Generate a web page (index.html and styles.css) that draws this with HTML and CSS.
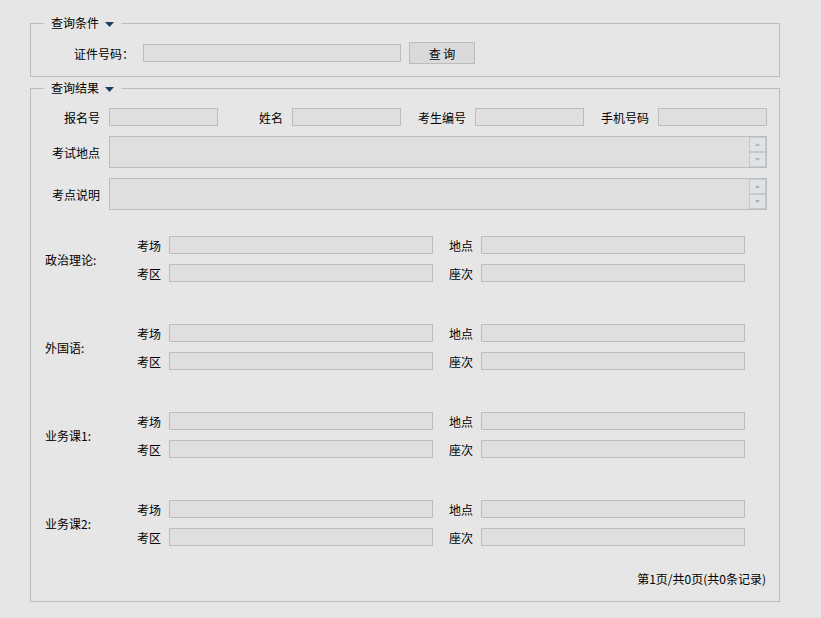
FILE: index.html
```html
<!DOCTYPE html>
<html lang="zh-CN">
<head>
    <meta charset="UTF-8">
    <title>准考证查询</title>
    <link rel="stylesheet" href="styles.css">
</head>
<body>
    <!-- 查询条件 -->
    <fieldset class="group group-search">
        <legend>查询条件<svg class="caret" width="9" height="5" viewBox="0 0 9 5"><polygon points="0,0 9,0 4.5,5" fill="#1c3f5f"/></svg></legend>
        <div class="search-row">
            <label class="search-label">证件号码：</label>
            <input type="text" class="field id-field">
            <button class="query-btn">查 询</button>
        </div>
    </fieldset>

    <!-- 查询结果 -->
    <fieldset class="group group-result">
        <legend>查询结果<svg class="caret" width="9" height="5" viewBox="0 0 9 5"><polygon points="0,0 9,0 4.5,5" fill="#1c3f5f"/></svg></legend>
        <div class="result">
            <div class="info-grid">
                <label>报名号</label><input type="text" class="field">
                <label>姓名</label><input type="text" class="field">
                <label>考生编号</label><input type="text" class="field">
                <label>手机号码</label><input type="text" class="field">
            </div>

            <div class="memo-row">
                <label>考试地点</label>
                <div class="memo">
                    <div class="memo-text"></div>
                    <div class="spin">
                        <span class="spin-btn"><svg width="5" height="3" viewBox="0 0 5 3"><polygon points="0,3 5,3 2.5,0" fill="#a3b2c1"/></svg></span>
                        <span class="spin-btn"><svg width="5" height="3" viewBox="0 0 5 3"><polygon points="0,0 5,0 2.5,3" fill="#a3b2c1"/></svg></span>
                    </div>
                </div>
            </div>
            <div class="memo-row">
                <label>考点说明</label>
                <div class="memo">
                    <div class="memo-text"></div>
                    <div class="spin">
                        <span class="spin-btn"><svg width="5" height="3" viewBox="0 0 5 3"><polygon points="0,3 5,3 2.5,0" fill="#a3b2c1"/></svg></span>
                        <span class="spin-btn"><svg width="5" height="3" viewBox="0 0 5 3"><polygon points="0,0 5,0 2.5,3" fill="#a3b2c1"/></svg></span>
                    </div>
                </div>
            </div>

            <div class="subject first">
                <div class="subject-name">政治理论:</div>
                <div class="subject-grid">
                    <label>考场</label><input type="text" class="field">
                    <label>地点</label><input type="text" class="field">
                    <label>考区</label><input type="text" class="field">
                    <label>座次</label><input type="text" class="field">
                </div>
            </div>
            <div class="subject">
                <div class="subject-name">外国语:</div>
                <div class="subject-grid">
                    <label>考场</label><input type="text" class="field">
                    <label>地点</label><input type="text" class="field">
                    <label>考区</label><input type="text" class="field">
                    <label>座次</label><input type="text" class="field">
                </div>
            </div>
            <div class="subject">
                <div class="subject-name">业务课1:</div>
                <div class="subject-grid">
                    <label>考场</label><input type="text" class="field">
                    <label>地点</label><input type="text" class="field">
                    <label>考区</label><input type="text" class="field">
                    <label>座次</label><input type="text" class="field">
                </div>
            </div>
            <div class="subject">
                <div class="subject-name">业务课2:</div>
                <div class="subject-grid">
                    <label>考场</label><input type="text" class="field">
                    <label>地点</label><input type="text" class="field">
                    <label>考区</label><input type="text" class="field">
                    <label>座次</label><input type="text" class="field">
                </div>
            </div>

            <div class="pager">第1页/共0页(共0条记录)</div>
        </div>
    </fieldset>
</body>
</html>
```

FILE: styles.css
```css
body {
    margin: 0;
    background-color: #e6e6e6;
    font-family: "Noto Sans CJK SC", "DejaVu Sans", sans-serif;
    font-size: 12px;
    color: #000;
}

.group {
    box-sizing: border-box;
    width: 750px;
    margin: 0 0 0 30px;
    padding: 0;
    border: 1px solid #bcbcbc;
    min-width: 0;
}

.group-search {
    margin-top: 15px;
}

.group-result {
    margin-top: 3px;
}

legend {
    margin-left: 13px;
    padding: 0 7px;
    line-height: 16px;
    height: 16px;
}

.caret {
    margin-left: 6px;
    vertical-align: 1px;
}

.field {
    box-sizing: border-box;
    height: 18px;
    margin: 0;
    padding: 0 3px;
    border: 1px solid #bcbcbc;
    background-color: #dfdfdf;
    font-family: inherit;
    font-size: 12px;
    outline: none;
}

label {
    line-height: 17px;
    white-space: nowrap;
}

/* search */
.search-row {
    display: flex;
    align-items: center;
    gap: 9px;
    padding: 11px 0 12px 43px;
}

.id-field {
    width: 258px;
}

.query-btn {
    box-sizing: border-box;
    width: 66px;
    height: 22px;
    margin-left: -1px;
    padding: 0;
    border: 1px solid #bcbcbc;
    background-color: #dadada;
    font-family: inherit;
    font-size: 12px;
    color: #000;
}

/* result */
.result {
    padding: 12px 13px 14px 13px;
}

.info-grid {
    display: grid;
    grid-template-columns: repeat(4, 56px 109px);
    column-gap: 9px;
    align-items: center;
}

.info-grid label {
    text-align: right;
}

.memo-row {
    display: grid;
    grid-template-columns: 56px 658px;
    column-gap: 9px;
    align-items: center;
    margin-top: 10px;
}

.memo-row label {
    text-align: right;
}

.memo {
    box-sizing: border-box;
    display: flex;
    height: 32px;
    border: 1px solid #bcbcbc;
    background-color: #dfdfdf;
}

.memo-text {
    flex: 1;
}

.spin {
    display: flex;
    flex-direction: column;
    width: 17px;
}

.spin-btn {
    box-sizing: border-box;
    display: flex;
    align-items: center;
    justify-content: center;
    height: 15px;
    border: 1px solid #bfcad5;
    background-color: #e0e3e6;
}

.subject {
    display: flex;
    align-items: center;
    margin-top: 42px;
    padding-left: 1px;
}

.subject.first {
    margin-top: 26px;
}

.subject-name {
    width: 92px;
}

.subject-grid {
    display: grid;
    grid-template-columns: 32px 280px 32px 264px;
    grid-auto-rows: 18px;
    row-gap: 10px;
    align-items: center;
}

.subject-grid .field {
    width: 264px;
}

.pager {
    margin-top: 25px;
    line-height: 16px;
    text-align: right;
}
```
